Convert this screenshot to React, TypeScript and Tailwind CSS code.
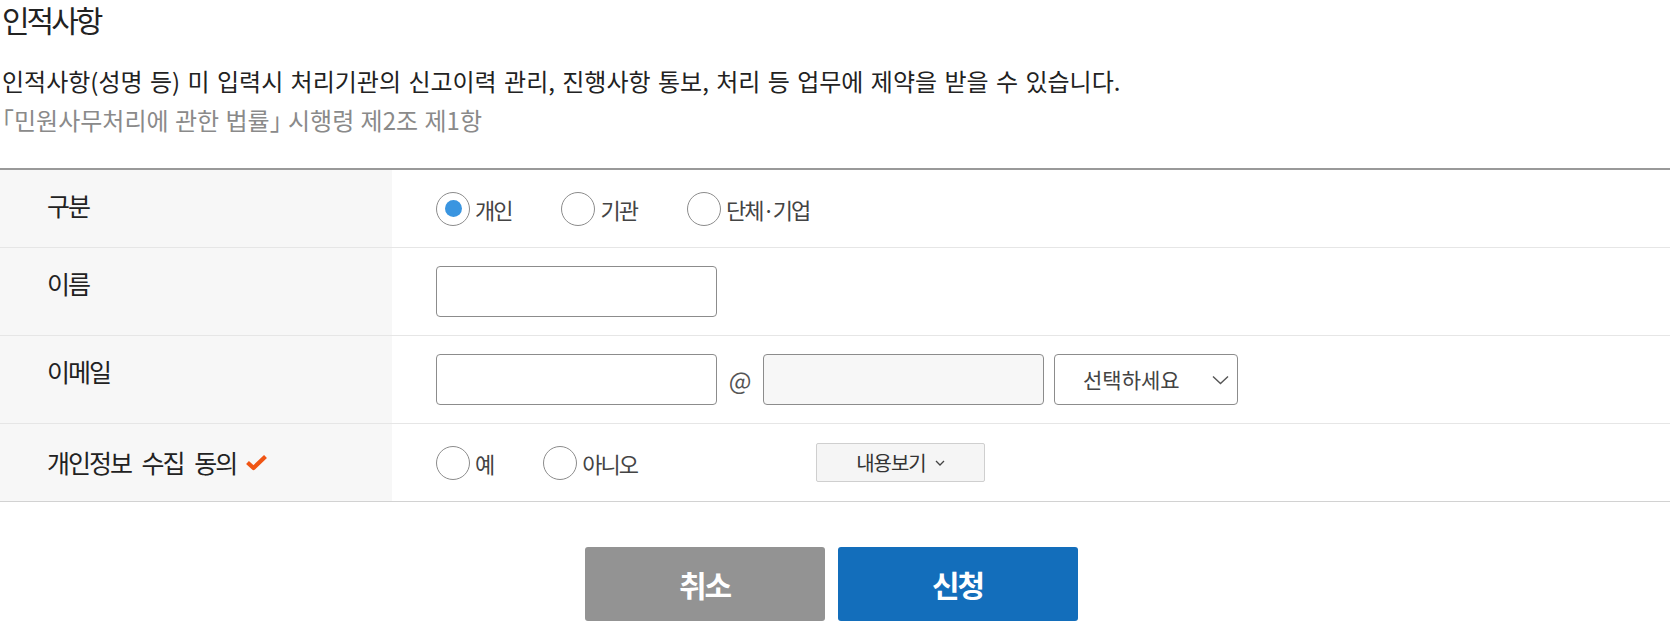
import { useState } from 'react';

const font = { fontFamily: '"Noto Sans CJK KR", "Noto Sans", sans-serif' };

const Radio = ({ checked, label, onClick }: { checked?: boolean; label: string; onClick?: () => void }) => (
  <button type="button" onClick={onClick} className="flex items-center mr-[50px] cursor-pointer">
    <span className="w-[34px] h-[34px] rounded-full border border-[#8c8c8c] bg-white flex items-center justify-center">
      {checked && <span className="w-[17px] h-[17px] rounded-full bg-[#3a95e0]" />}
    </span>
    <span className="ml-[5px] text-[22px] leading-[34px] tracking-[-2px] text-[#444]">{label}</span>
  </button>
);

const Label = ({ children }: { children: React.ReactNode }) => (
  <div className="bg-[#f7f7f7] pl-[47px] pt-[17px] text-[25px] leading-[36px] tracking-[-2px] [word-spacing:7px] text-[#222]">
    {children}
  </div>
);

const App = () => {
  const [kind, setKind] = useState('개인');
  const [agree, setAgree] = useState<string | null>(null);

  return (
    <div style={font} className="w-[1670px] bg-white">
      <h2 className="pl-[2px] text-[30px] leading-[38px] tracking-[-3px] text-[#222] font-normal">인적사항</h2>
      <p className="mt-[23px] pl-[2px] text-[24px] leading-[39px] tracking-[0px] [word-spacing:2px] text-[#222]">
        인적사항(성명 등) 미 입력시 처리기관의 신고이력 관리, 진행사항 통보, 처리 등 업무에 제약을 받을 수 있습니다.
      </p>
      <p className="pl-[2px] text-[24px] leading-[39px] tracking-[0px] [word-spacing:1px] text-[#8a8a8a]">
        ｢민원사무처리에 관한 법률｣ 시행령 제2조 제1항
      </p>

      <div className="mt-[29px] border-t-2 border-[#999] border-b border-b-[#d2d2d2]">
        {/* 구분 */}
        <div className="grid grid-cols-[392px_1fr] h-[78px] border-b border-[#e6e6e6]">
          <Label>구분</Label>
          <div className="flex items-center pl-[44px]">
            {['개인', '기관', '단체·기업'].map((k) => (
              <Radio key={k} label={k} checked={kind === k} onClick={() => setKind(k)} />
            ))}
          </div>
        </div>

        {/* 이름 */}
        <div className="grid grid-cols-[392px_1fr] h-[88px] border-b border-[#e6e6e6]">
          <Label>이름</Label>
          <div className="flex items-center pl-[44px]">
            <input className="w-[281px] h-[51px] rounded-[4px] border border-[#8c8c8c] bg-white px-3 outline-none" />
          </div>
        </div>

        {/* 이메일 */}
        <div className="grid grid-cols-[392px_1fr] h-[88px] border-b border-[#e6e6e6]">
          <Label>이메일</Label>
          <div className="flex items-center pl-[44px]">
            <input className="w-[281px] h-[51px] rounded-[4px] border border-[#8c8c8c] bg-white px-3 outline-none" />
            <span className="w-[46px] text-center text-[24px] text-[#555]">@</span>
            <input disabled className="w-[281px] h-[51px] rounded-[4px] border border-[#8c8c8c] bg-[#f7f7f7] px-3 outline-none" />
            <div className="ml-[10px] w-[184px] h-[51px] rounded-[4px] border border-[#8c8c8c] bg-white flex items-center pl-[28px] pr-[8px]">
              <span className="flex-1 text-[21px] tracking-[0px] text-[#444]">선택하세요</span>
              <svg width="17" height="10" viewBox="0 0 17 10" fill="none">
                <path d="M1 1.5 L8.5 8.5 L16 1.5" stroke="#555" strokeWidth="1.4" />
              </svg>
            </div>
          </div>
        </div>

        {/* 개인정보 수집 동의 */}
        <div className="grid grid-cols-[392px_1fr] h-[77px]">
          <div className="bg-[#f7f7f7] pl-[47px] pt-[20px] flex items-start text-[25px] leading-[36px] tracking-[-2px] [word-spacing:7px] text-[#222]">
            개인정보 수집 동의
            <svg className="ml-[9px] mt-[10px]" width="23" height="17" viewBox="0 0 23 17" fill="none">
              <path d="M2.5 8.5 L8.5 14 L20.5 2.5" stroke="#f05514" strokeWidth="4.2" strokeLinejoin="round" />
            </svg>
          </div>
          <div className="flex items-center pl-[44px]">
            <Radio label="예" checked={agree === '예'} onClick={() => setAgree('예')} />
            <Radio label="아니오" checked={agree === '아니오'} onClick={() => setAgree('아니오')} />
            <button
              type="button"
              className="ml-[129px] w-[169px] h-[39px] rounded-[2px] border border-[#cfcfcf] bg-[#f5f5f5] flex items-center justify-center text-[20px] tracking-[-1px] text-[#333]"
            >
              내용보기
              <svg className="ml-[9px]" width="10" height="6" viewBox="0 0 10 6" fill="none">
                <path d="M1 1 L5 5 L9 1" stroke="#444" strokeWidth="1.3" />
              </svg>
            </button>
          </div>
        </div>
      </div>

      <div className="flex justify-center gap-[13px] pr-[8px] mt-[45px] pb-[15px]">
        <button className="w-[240px] h-[74px] rounded-[3px] bg-[#939393] text-white text-[30px] font-bold tracking-[-2px]">
          취소
        </button>
        <button className="w-[240px] h-[74px] rounded-[3px] bg-[#136ebb] text-white text-[30px] font-bold tracking-[-2px]">
          신청
        </button>
      </div>
    </div>
  );
};

export default App;
